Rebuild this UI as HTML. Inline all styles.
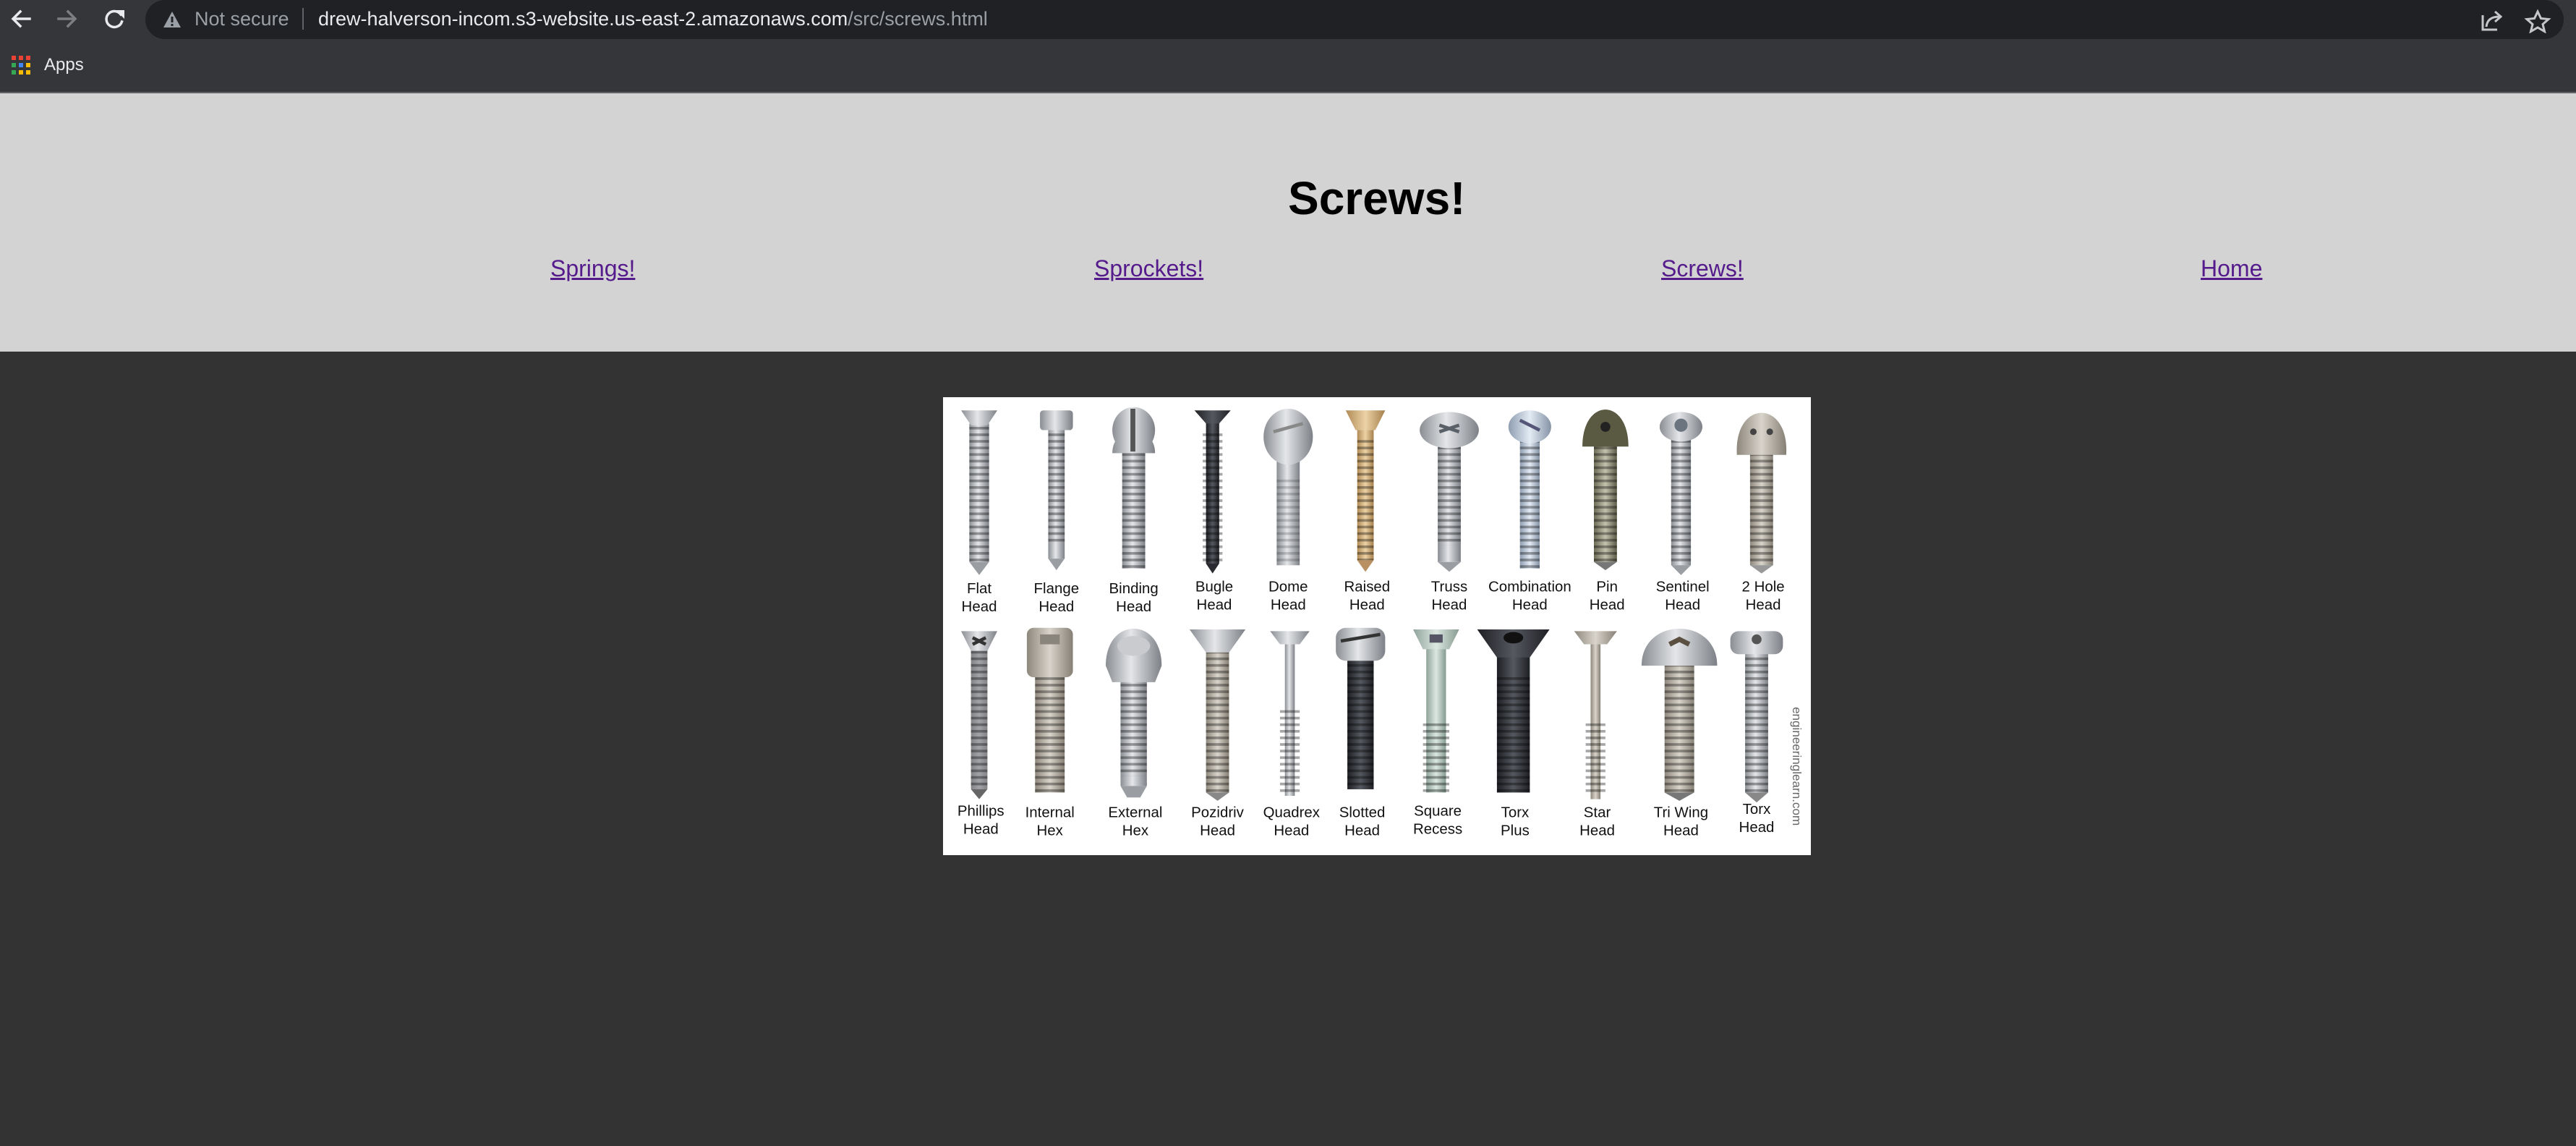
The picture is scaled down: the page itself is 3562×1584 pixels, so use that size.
<!DOCTYPE html>
<html><head><meta charset="utf-8"><style>
*{margin:0;padding:0;box-sizing:border-box}
html,body{width:3562px;height:1584px;overflow:hidden;background:#333333;font-family:"Liberation Sans",Arial,sans-serif}
.abs{position:absolute}
#top{left:0;top:0;width:3562px;height:57px;background:#35363a}
#pill{left:201px;top:0;width:3344px;height:54px;background:#202124;border-radius:0 0 27px 27px / 0 0 27px 27px;border-radius:27px}
#bm{left:0;top:57px;width:3562px;height:70px;background:#35363a}
#line{left:0;top:127px;width:3562px;height:2px;background:#5f6368}
#hdr{left:0;top:129px;width:3562px;height:357px;background:#d3d3d3}
.url{font-size:27px;line-height:1;top:13px;white-space:nowrap}
h1{position:absolute;left:1781px;top:242px;font-size:64px;line-height:1;font-weight:bold;color:#000}
.lk{position:absolute;top:355px;font-size:32px;line-height:1;color:#551a8b;text-decoration:underline}
#img{left:1304px;top:549px;width:1200px;height:633px;background:#fff}
</style></head><body>
<div id="top" class="abs"></div>
<div id="pill" class="abs"></div>
<svg class="abs" style="left:0;top:0" width="200" height="57">
<g fill="none" stroke-width="3.5" stroke-linecap="square">
<path d="M41 26H19M28 16l-10 10 10 10" stroke="#e8eaed"/>
<path d="M81 26H103M94 16l10 10-10 10" stroke="#7c7e82"/>
<path d="M167 20a11 11 0 1 0 1.5 10" stroke="#e8eaed"/>
</g>
<path d="M160 14h12v12z" fill="#e8eaed"/>
</svg>
<svg class="abs" style="left:224px;top:14px" width="28" height="26"><path d="M14 2L26 24H2z" fill="#9aa0a6"/><rect x="12.5" y="9" width="3" height="8" fill="#202124"/><rect x="12.5" y="19" width="3" height="3" fill="#202124"/></svg>
<div class="abs url" style="left:269px;color:#9aa0a6">Not secure</div>
<div class="abs" style="left:418px;top:11px;width:2px;height:30px;background:#5f6368"></div>
<div class="abs url" style="left:440px;color:#e8eaed">drew-halverson-incom.s3-website.us-east-2.amazonaws.com<span style="color:#9aa0a6">/src/screws.html</span></div>
<svg class="abs" style="left:3425px;top:12px" width="110" height="34">
<g fill="none" stroke="#c4c6c9" stroke-width="3">
<path d="M8 9v20h20"/><path d="M13 25c1-10 8-14 18-14M25 4l8 7-8 7"/>
<path d="M84 4l4.5 9.5 10.5 1-8 7 2.5 10-9.5-5.5-9.5 5.5 2.5-10-8-7 10.5-1z" stroke-linejoin="miter"/>
</g></svg>
<div id="bm" class="abs"></div>
<svg class="abs" style="left:16px;top:77px" width="28" height="28">
<rect x="0" y="0" width="6" height="6" fill="#ea4335"/><rect x="10" y="0" width="6" height="6" fill="#ea4335"/><rect x="20" y="0" width="6" height="6" fill="#ea4335"/>
<rect x="0" y="10" width="6" height="6" fill="#34a853"/><rect x="10" y="10" width="6" height="6" fill="#4285f4"/><rect x="20" y="10" width="6" height="6" fill="#fbbc04"/>
<rect x="0" y="20" width="6" height="6" fill="#34a853"/><rect x="10" y="20" width="6" height="6" fill="#fbbc04"/><rect x="20" y="20" width="6" height="6" fill="#fbbc04"/>
</svg>
<div class="abs" style="left:61px;top:78px;font-size:24px;line-height:1;color:#e8eaed">Apps</div>
<div id="line" class="abs"></div>
<div id="hdr" class="abs"></div>
<h1>Screws!</h1>
<a class="lk" style="left:761px">Springs!</a>
<a class="lk" style="left:1513px">Sprockets!</a>
<a class="lk" style="left:2297px">Screws!</a>
<a class="lk" style="left:3043px">Home</a>

<svg class="abs" id="img" style="left:1304px;top:549px" width="1200" height="633" viewBox="574 242 528 278" preserveAspectRatio="none">
<defs>
<pattern id="th" patternUnits="userSpaceOnUse" width="4" height="4"><rect width="4" height="1.6" fill="#000" opacity=".35"/></pattern>
<linearGradient id="sil" x1="0" x2="1"><stop offset="0" stop-color="#8a8d92"/><stop offset=".45" stop-color="#e4e6e9"/><stop offset="1" stop-color="#7d8086"/></linearGradient>
<linearGradient id="drk" x1="0" x2="1"><stop offset="0" stop-color="#1e1f24"/><stop offset=".5" stop-color="#55585f"/><stop offset="1" stop-color="#1e1f24"/></linearGradient>
<linearGradient id="gld" x1="0" x2="1"><stop offset="0" stop-color="#b08a55"/><stop offset=".5" stop-color="#ecd2a6"/><stop offset="1" stop-color="#a57f4b"/></linearGradient>
<linearGradient id="olv" x1="0" x2="1"><stop offset="0" stop-color="#6b6a55"/><stop offset=".5" stop-color="#c3c2ad"/><stop offset="1" stop-color="#5c5b48"/></linearGradient>
<linearGradient id="bge" x1="0" x2="1"><stop offset="0" stop-color="#8d877c"/><stop offset=".5" stop-color="#d9d4cb"/><stop offset="1" stop-color="#857f74"/></linearGradient>
<linearGradient id="grn" x1="0" x2="1"><stop offset="0" stop-color="#8fa39a"/><stop offset=".5" stop-color="#dbe8e1"/><stop offset="1" stop-color="#869a90"/></linearGradient>
<linearGradient id="blu" x1="0" x2="1"><stop offset="0" stop-color="#8e9db0"/><stop offset=".5" stop-color="#e3ebf4"/><stop offset="1" stop-color="#8593a6"/></linearGradient>
</defs>
<rect x="574" y="242" width="528" height="278" fill="#fff"/>
<!-- row 1 -->
<g>
<!-- flat -->
<rect x="590" y="258" width="12" height="84" fill="url(#sil)"/><rect x="590" y="258" width="12" height="84" fill="url(#th)"/><path d="M590 342h12l-6 8z" fill="#9a9da2"/><path d="M585 250h22l-6 9h-10z" fill="url(#sil)"/>
<!-- flange -->
<rect x="638" y="262" width="10" height="78" fill="url(#sil)"/><rect x="638" y="262" width="10" height="68" fill="url(#th)"/><path d="M638 340h10l-5 7z" fill="#9a9da2"/><rect x="633" y="250" width="20" height="12" rx="2" fill="url(#sil)"/>
<!-- binding -->
<rect x="683" y="272" width="14" height="74" fill="url(#sil)"/><rect x="683" y="272" width="14" height="74" fill="url(#th)"/><path d="M677 276c0-18 26-18 26 0z" fill="url(#sil)"/><ellipse cx="690" cy="262" rx="13" ry="14" fill="url(#sil)"/><rect x="688" y="249" width="3" height="26" fill="#555"/>
<!-- bugle -->
<rect x="734" y="255" width="8" height="88" fill="url(#drk)"/><rect x="732" y="262" width="12" height="80" fill="url(#th)"/><path d="M734 343h8l-4 6z" fill="#2a2b30"/><path d="M727 250h22l-7 8h-8z" fill="url(#drk)"/>
<!-- dome -->
<rect x="777" y="278" width="14" height="66" fill="url(#sil)"/><rect x="777" y="290" width="14" height="54" fill="url(#th)" opacity=".5"/><ellipse cx="784" cy="266" rx="15" ry="17" fill="url(#sil)"/><path d="M775 263l18-5" stroke="#888" stroke-width="2"/>
<!-- raised -->
<rect x="826" y="261" width="10" height="80" fill="url(#gld)"/><rect x="826" y="268" width="10" height="73" fill="url(#th)"/><path d="M826 341h10l-5 7z" fill="#b89061"/><path d="M819 250h24l-6 12h-12z" fill="url(#gld)"/>
<!-- truss -->
<rect x="875" y="268" width="14" height="74" fill="url(#sil)"/><rect x="875" y="268" width="14" height="64" fill="url(#th)"/><path d="M875 342h14l-7 6z" fill="#9a9da2"/><ellipse cx="882" cy="262" rx="18" ry="11" fill="url(#sil)"/><path d="M876 259l12 4M888 259l-12 4" stroke="#5a6068" stroke-width="2"/>
<!-- combination -->
<rect x="925" y="266" width="12" height="80" fill="url(#blu)"/><rect x="925" y="266" width="12" height="80" fill="url(#th)"/><ellipse cx="931" cy="260" rx="13" ry="10" fill="url(#blu)"/><path d="M925 256l12 6" stroke="#557" stroke-width="2"/>
<!-- pin -->
<rect x="970" y="268" width="14" height="74" fill="url(#olv)"/><rect x="970" y="268" width="14" height="74" fill="url(#th)"/><path d="M970 342h14l-7 5z" fill="#777"/><path d="M963 272c0-30 28-30 28 0z" fill="#5a5a42"/><circle cx="977" cy="260" r="3" fill="#222"/>
<!-- sentinel -->
<rect x="1017" y="266" width="12" height="78" fill="url(#sil)"/><rect x="1017" y="266" width="12" height="78" fill="url(#th)"/><path d="M1017 344h12l-6 6z" fill="#9a9da2"/><ellipse cx="1023" cy="260" rx="13" ry="9" fill="url(#sil)"/><circle cx="1023" cy="259" r="4" fill="#6c7480"/>
<!-- 2 hole -->
<rect x="1065" y="274" width="14" height="70" fill="url(#bge)"/><rect x="1065" y="274" width="14" height="70" fill="url(#th)"/><path d="M1065 344h14l-7 5z" fill="#999"/><path d="M1057 277c-2-34 32-34 30 0z" fill="url(#bge)"/><circle cx="1067" cy="263" r="2" fill="#444"/><circle cx="1077" cy="263" r="2" fill="#444"/>
</g>
<!-- row 2 -->
<g>
<rect x="591" y="394" width="10" height="86" fill="url(#drk)" opacity=".55"/><rect x="591" y="394" width="10" height="86" fill="url(#th)"/><path d="M591 480h10l-5 6z" fill="#666"/><path d="M585 384h22l-6 12h-10z" fill="url(#sil)"/><path d="M592 388l8 4M600 388l-8 4" stroke="#333" stroke-width="2"/>
<rect x="630" y="410" width="18" height="72" fill="url(#bge)"/><rect x="630" y="410" width="18" height="72" fill="url(#th)"/><rect x="625" y="382" width="28" height="30" rx="4" fill="url(#bge)"/><rect x="633" y="386" width="12" height="6" fill="#8a857c"/>
<rect x="682" y="412" width="16" height="66" fill="url(#sil)"/><rect x="682" y="412" width="16" height="60" fill="url(#th)"/><path d="M682 478h16l-4 7h-8z" fill="#9a9da2"/><path d="M673 405c0-30 34-30 34 0l-4 10h-26z" fill="url(#sil)"/><ellipse cx="690" cy="393" rx="10" ry="6" fill="#c9cbce"/>
<rect x="734" y="396" width="14" height="86" fill="url(#bge)"/><rect x="734" y="396" width="14" height="86" fill="url(#th)"/><path d="M734 482h14l-7 5z" fill="#888"/><path d="M724 383h34l-10 14h-14z" fill="url(#sil)"/>
<rect x="782" y="392" width="6" height="92" fill="url(#sil)"/><rect x="779" y="430" width="12" height="52" fill="url(#th)"/><path d="M773 384h24l-6 8h-12z" fill="url(#sil)"/>
<rect x="820" y="400" width="16" height="80" fill="url(#drk)"/><rect x="820" y="400" width="16" height="80" fill="url(#th)"/><rect x="813" y="382" width="30" height="20" rx="6" fill="url(#sil)"/><path d="M816 390l24-4" stroke="#333" stroke-width="2"/>
<rect x="868" y="394" width="12" height="88" fill="url(#grn)"/><rect x="866" y="440" width="16" height="42" fill="url(#th)"/><path d="M860 383h28l-6 12h-16z" fill="url(#grn)"/><rect x="870" y="386" width="8" height="5" fill="#556"/>
<rect x="911" y="398" width="20" height="84" fill="url(#drk)"/><rect x="911" y="410" width="20" height="72" fill="url(#th)"/><path d="M899 383h44l-12 17h-20z" fill="url(#drk)"/><ellipse cx="921" cy="388" rx="6" ry="3.5" fill="#111"/>
<rect x="968" y="392" width="6" height="94" fill="url(#bge)"/><rect x="965" y="440" width="12" height="44" fill="url(#th)"/><path d="M958 384h26l-6 8h-14z" fill="url(#bge)"/>
<rect x="1013" y="402" width="18" height="80" fill="url(#bge)"/><rect x="1013" y="402" width="18" height="80" fill="url(#th)"/><path d="M1013 482h18l-9 5z" fill="#777"/><path d="M999 405c0-30 46-30 46 0z" fill="url(#sil)"/><path d="M1016 392l6-3 6 3" stroke="#5a4f40" stroke-width="3" fill="none"/>
<rect x="1062" y="396" width="14" height="86" fill="url(#sil)"/><rect x="1062" y="396" width="14" height="86" fill="url(#th)"/><path d="M1062 482h14l-7 6z" fill="#888"/><rect x="1053" y="384" width="32" height="14" rx="5" fill="url(#sil)"/><circle cx="1069" cy="389" r="3" fill="#555"/>
</g>
<g font-family="Liberation Sans, Arial, sans-serif" font-size="9" fill="#111" text-anchor="middle">
<text x="596" y="361">Flat</text><text x="596" y="372">Head</text>
<text x="643" y="361">Flange</text><text x="643" y="372">Head</text>
<text x="690" y="361">Binding</text><text x="690" y="372">Head</text>
<text x="739" y="360">Bugle</text><text x="739" y="371">Head</text>
<text x="784" y="360">Dome</text><text x="784" y="371">Head</text>
<text x="832" y="360">Raised</text><text x="832" y="371">Head</text>
<text x="882" y="360">Truss</text><text x="882" y="371">Head</text>
<text x="931" y="360">Combination</text><text x="931" y="371">Head</text>
<text x="978" y="360">Pin</text><text x="978" y="371">Head</text>
<text x="1024" y="360">Sentinel</text><text x="1024" y="371">Head</text>
<text x="1073" y="360">2 Hole</text><text x="1073" y="371">Head</text>
<text x="597" y="496">Phillips</text><text x="597" y="507">Head</text>
<text x="639" y="497">Internal</text><text x="639" y="508">Hex</text>
<text x="691" y="497">External</text><text x="691" y="508">Hex</text>
<text x="741" y="497">Pozidriv</text><text x="741" y="508">Head</text>
<text x="786" y="497">Quadrex</text><text x="786" y="508">Head</text>
<text x="829" y="497">Slotted</text><text x="829" y="508">Head</text>
<text x="875" y="496">Square</text><text x="875" y="507">Recess</text>
<text x="922" y="497">Torx</text><text x="922" y="508">Plus</text>
<text x="972" y="497">Star</text><text x="972" y="508">Head</text>
<text x="1023" y="497">Tri Wing</text><text x="1023" y="508">Head</text>
<text x="1069" y="495">Torx</text><text x="1069" y="506">Head</text>
</g>
<text x="0" y="0" font-family="Liberation Sans, Arial, sans-serif" font-size="7.5" fill="#666" transform="translate(1091 430) rotate(90)">engineeringlearn.com</text>
</svg>
</body></html>
